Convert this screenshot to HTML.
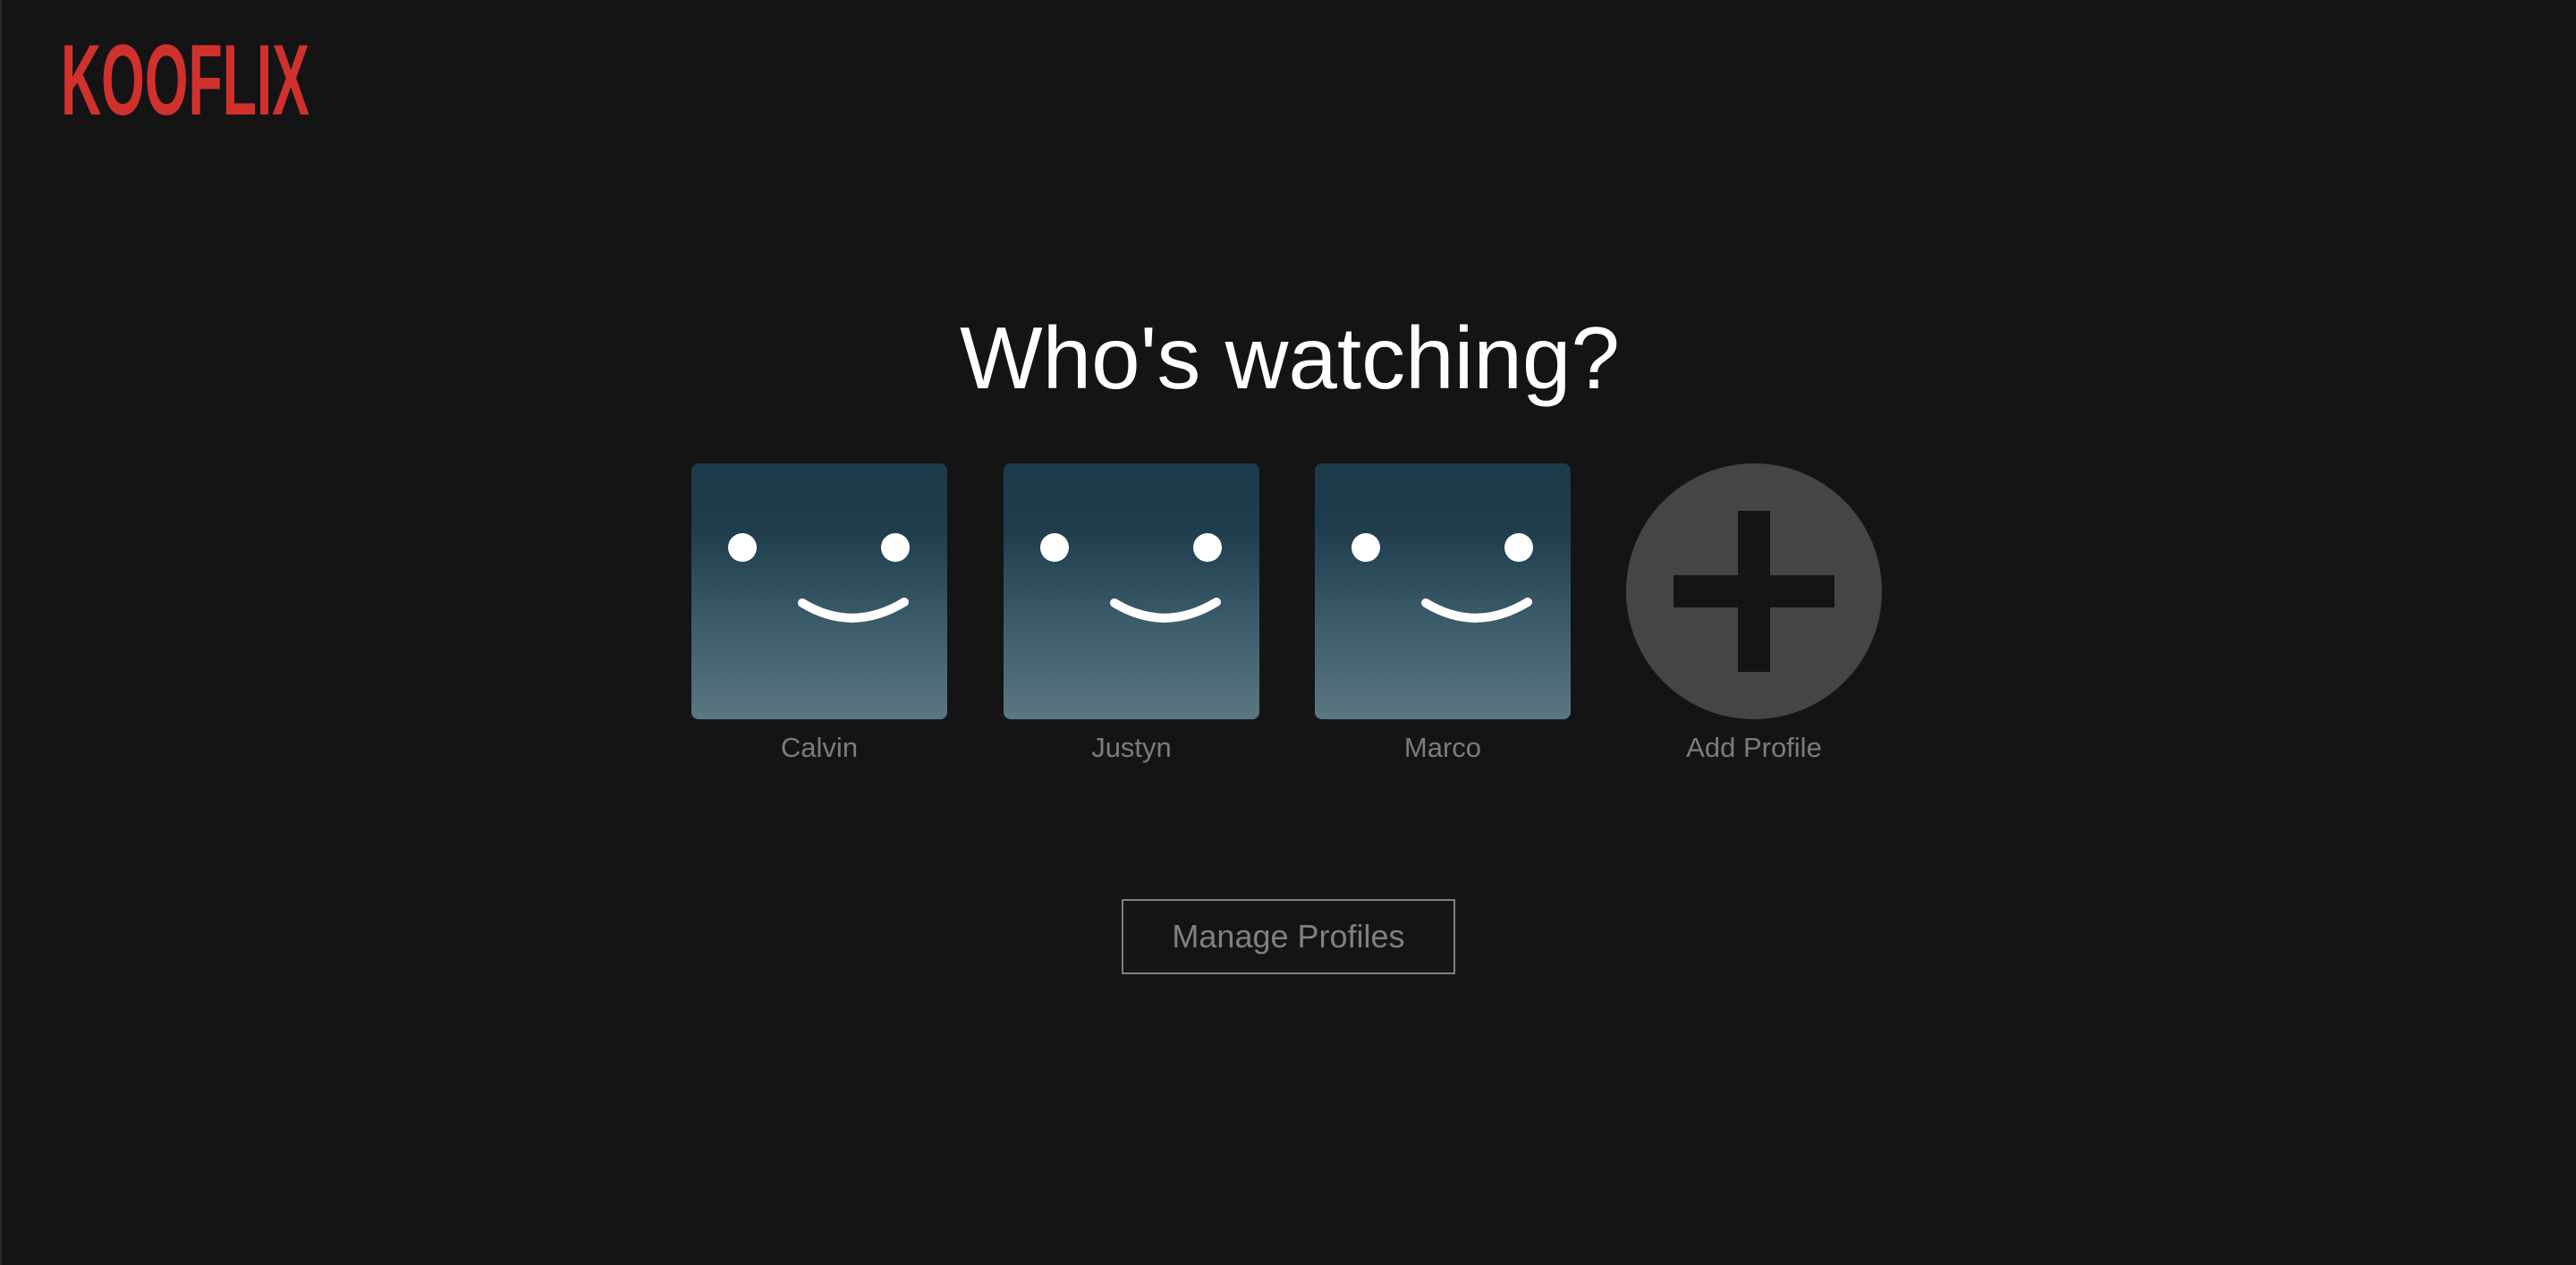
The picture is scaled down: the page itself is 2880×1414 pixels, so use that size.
<!DOCTYPE html>
<html><head><style>
html,body{margin:0;padding:0;}
body{width:2880px;height:1414px;background:#141414;position:relative;overflow:hidden;font-family:"Liberation Sans",sans-serif;border-left:2px solid #2a2a2a;box-sizing:border-box;}
.logo{position:absolute;left:66px;top:40px;}
h1{position:absolute;left:0;width:2880px;top:340px;margin:0;text-align:center;color:#fff;font-weight:400;font-size:98px;line-height:120px;}
.tile{position:absolute;top:518px;width:286px;height:286px;border-radius:8px;background:linear-gradient(#1c3a4a 0%,#1e3c4c 25%,#3a5a68 60%,#5b7782 100%);}
.lbl{position:absolute;top:816px;width:286px;text-align:center;color:#7c7c7c;font-size:31px;line-height:40px;}
.add{position:absolute;left:1816px;top:518px;width:286px;height:286px;border-radius:50%;background:#454545;}
.btn{position:absolute;left:1252px;top:1005px;width:373px;height:84px;box-sizing:border-box;border:2px solid #808080;color:#808080;font-size:36px;line-height:80px;text-align:center;}
</style></head><body>
<svg class="logo" width="290" height="100" viewBox="0 0 290 100"><text x="0" y="88" fill="#d0312d" font-family="Liberation Sans Narrow, Liberation Sans, sans-serif" font-weight="700" font-size="112" textLength="278" lengthAdjust="spacingAndGlyphs">KOOFLIX</text></svg>
<h1>Who's watching?</h1>

<div class="tile" style="left:771px"><svg width="286" height="286"><circle cx="57" cy="94" r="16" fill="#fff"/><circle cx="228" cy="94" r="16" fill="#fff"/><path d="M124 156 Q180 190 238 155" stroke="#fff" stroke-width="10" fill="none" stroke-linecap="round"/></svg></div>
<div class="lbl" style="left:771px">Calvin</div>
<div class="tile" style="left:1120px"><svg width="286" height="286"><circle cx="57" cy="94" r="16" fill="#fff"/><circle cx="228" cy="94" r="16" fill="#fff"/><path d="M124 156 Q180 190 238 155" stroke="#fff" stroke-width="10" fill="none" stroke-linecap="round"/></svg></div>
<div class="lbl" style="left:1120px">Justyn</div>
<div class="tile" style="left:1468px"><svg width="286" height="286"><circle cx="57" cy="94" r="16" fill="#fff"/><circle cx="228" cy="94" r="16" fill="#fff"/><path d="M124 156 Q180 190 238 155" stroke="#fff" stroke-width="10" fill="none" stroke-linecap="round"/></svg></div>
<div class="lbl" style="left:1468px">Marco</div>
<div class="add"><svg width="286" height="286"><rect x="53" y="125" width="180" height="36" fill="#141414"/><rect x="125" y="53" width="36" height="180" fill="#141414"/></svg></div>
<div class="lbl" style="left:1816px">Add Profile</div>

<div class="btn">Manage Profiles</div>
</body></html>
